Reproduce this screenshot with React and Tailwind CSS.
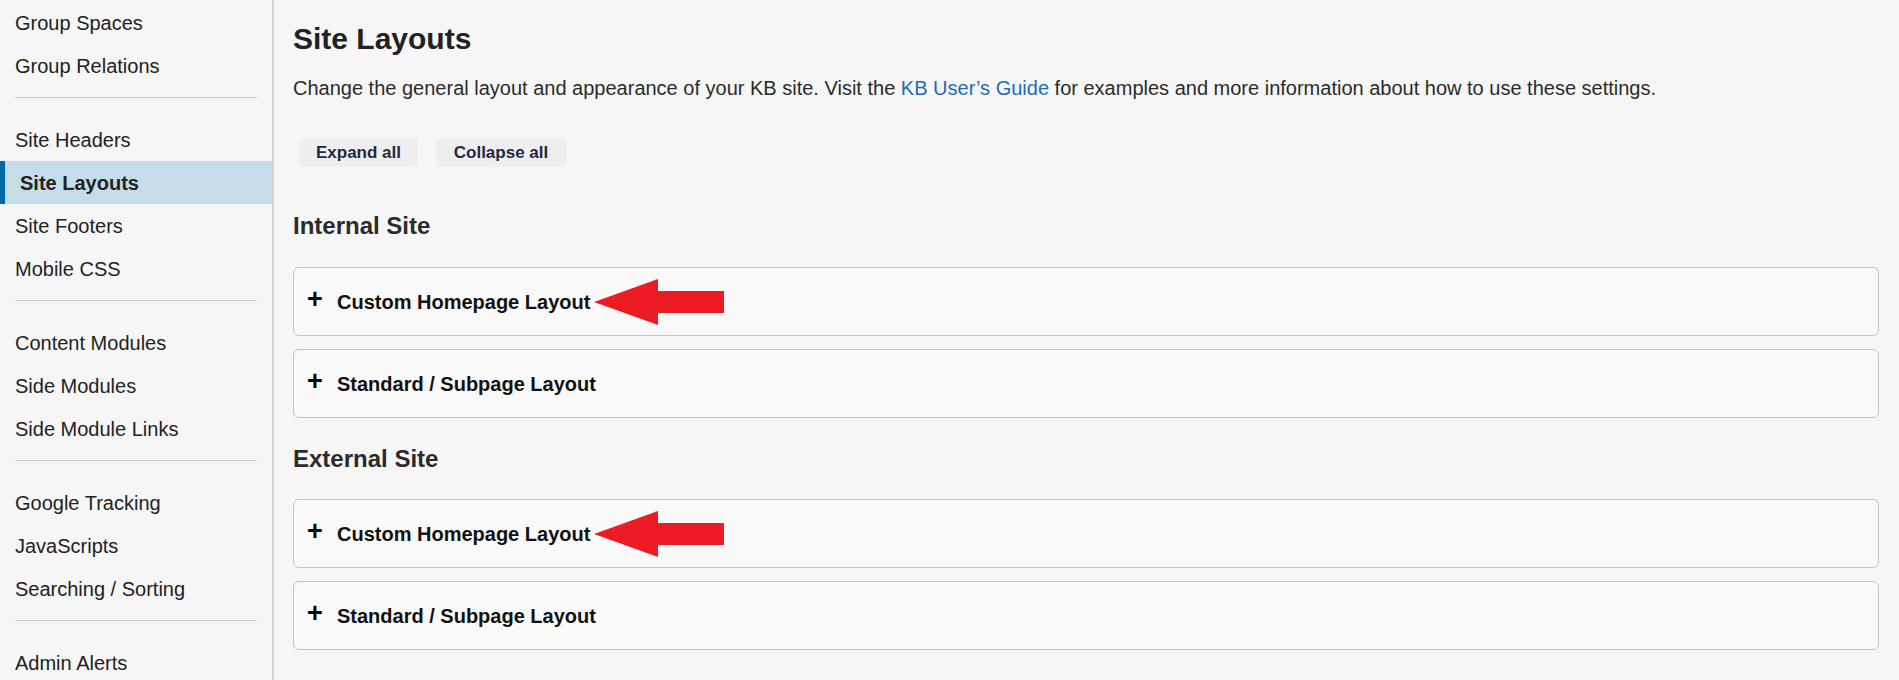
import React from "react";

const sideGroups = [
  ["Group Spaces", "Group Relations"],
  ["Site Headers", "Site Layouts", "Site Footers", "Mobile CSS"],
  ["Content Modules", "Side Modules", "Side Module Links"],
  ["Google Tracking", "JavaScripts", "Searching / Sorting"],
  ["Admin Alerts"],
];

function Arrow() {
  return (
    <svg width="130" height="46" viewBox="0 0 130 46" className="ml-[4px] shrink-0">
      <polygon points="0,23 64,0 64,12 130,12 130,34 64,34 64,46" fill="#ed1c24" />
    </svg>
  );
}

function Panel({ title, arrow }) {
  return (
    <div className="h-[69px] rounded-[6px] border border-[#c4c4c4] bg-[#f9f9f9] flex items-center pl-[13px]">
      <span className="w-[16px] text-[27px] font-bold leading-none text-black -mt-[5px]">+</span>
      <span className="ml-[14px] text-[20px] font-bold text-[#111]">{title}</span>
      {arrow && <Arrow />}
    </div>
  );
}

export default function App() {
  return (
    <div
      className="flex h-[680px] overflow-hidden bg-[#f6f6f6] text-[#2b2b2b]"
      style={{ fontFamily: '"Liberation Sans", Arial, sans-serif' }}
    >
      {/* Sidebar */}
      <aside className="w-[274px] shrink-0 border-r-2 border-[#d2d2d2] pt-[1px]">
        {sideGroups.map((group, gi) => (
          <div key={gi}>
            {gi > 0 && <div className="mx-[15px] mt-[10px] mb-[20px] h-px bg-[#c9c9c9]" />}
            {group.map((item) =>
              item === "Site Layouts" ? (
                <div
                  key={item}
                  className="h-[43px] flex items-center bg-[#c5dde8] border-l-[5px] border-[#0068a6] pl-[15px] text-[20px] font-bold text-[#222]"
                >
                  {item}
                </div>
              ) : (
                <div key={item} className="h-[43px] flex items-center pl-[15px] text-[20px] text-[#222]">
                  {item}
                </div>
              )
            )}
          </div>
        ))}
      </aside>

      {/* Main */}
      <main className="flex-1 pl-[19px] pr-[20px]">
        <h1 className="mt-[21px] text-[30px] font-bold leading-[36px] text-[#222]">Site Layouts</h1>
        <p className="mt-[17px] text-[20px] leading-[28px] text-[#2b2b2b]">
          Change the general layout and appearance of your KB site. Visit the{" "}
          <a className="text-[#1f6db5]">KB User’s Guide</a> for examples and more information about how to
          use these settings.
        </p>
        <div className="mt-[36px] ml-[6px] flex gap-[18px]">
          <button className="h-[29px] w-[119px] rounded-[4px] bg-[#eeeeee] text-[17px] font-bold text-[#1e2a40]">
            Expand all
          </button>
          <button className="h-[29px] w-[130px] rounded-[4px] bg-[#eeeeee] text-[17px] font-bold text-[#1e2a40]">
            Collapse all
          </button>
        </div>

        <h2 className="mt-[44px] text-[24px] font-bold leading-[30px] text-[#2b2b2b]">Internal Site</h2>
        <div className="mt-[26px] flex flex-col gap-[13px]">
          <Panel title="Custom Homepage Layout" arrow />
          <Panel title="Standard / Subpage Layout" />
        </div>

        <h2 className="mt-[26px] text-[24px] font-bold leading-[30px] text-[#2b2b2b]">External Site</h2>
        <div className="mt-[25px] flex flex-col gap-[13px]">
          <Panel title="Custom Homepage Layout" arrow />
          <Panel title="Standard / Subpage Layout" />
        </div>
      </main>
    </div>
  );
}
